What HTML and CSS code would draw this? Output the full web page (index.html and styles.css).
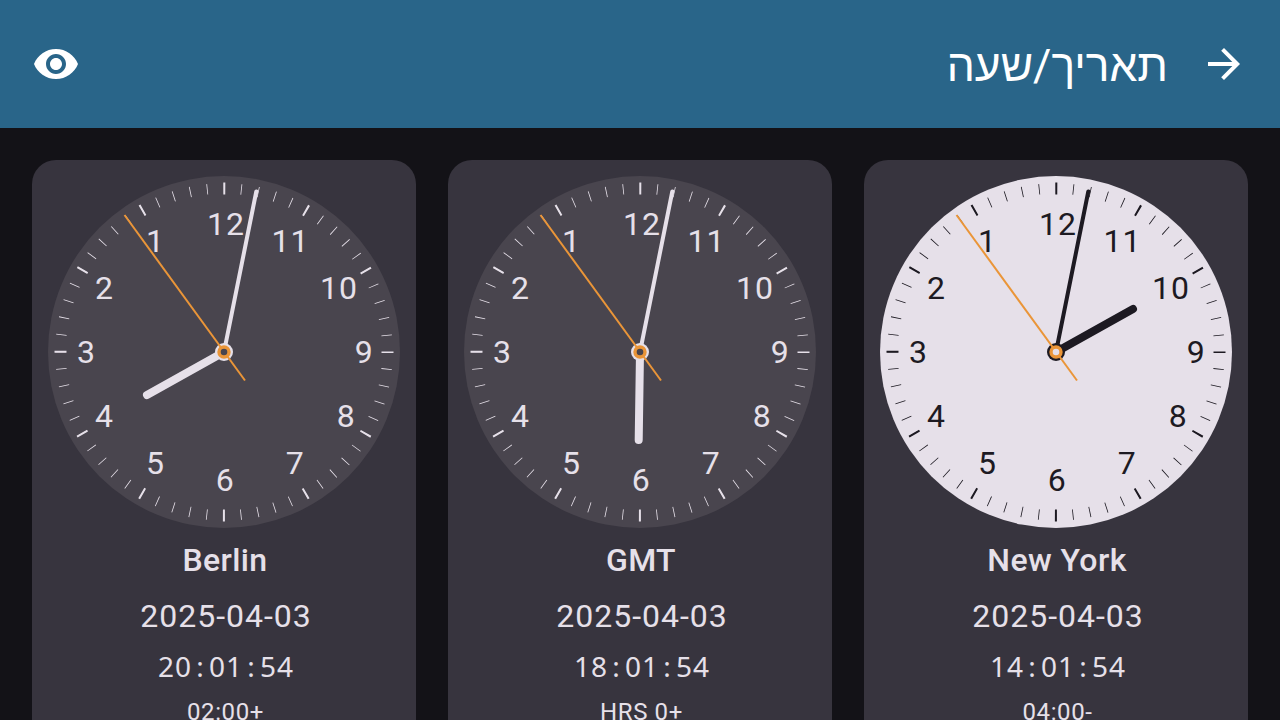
FILE: index.html
```html
<!DOCTYPE html>
<html lang="he">
<head>
<meta charset="utf-8">
<title>תאריך/שעה</title>
<link rel="stylesheet" href="styles.css">
</head>
<body>
<svg class="defs" aria-hidden="true">
  <defs>
    <g id="dial">
      <circle class="face" r="176"/>
      <circle class="tick-minor" r="163.5"/>
      <circle class="tick-hour" r="163.5"/>
      <g class="numerals">
        <text x="2" y="-117.3">12</text>
        <text x="66.5" y="-100.3">11</text>
        <text x="115" y="-53.3">10</text>
        <text x="140.3" y="10.700">9</text>
        <text x="122.300" y="74.700">8</text>
        <text x="71.300" y="121.700">7</text>
        <text x="1.300" y="138.700">6</text>
        <text x="-68.500" y="121.700">5</text>
        <text x="-119.500" y="74.700">4</text>
        <text x="-137.500" y="10.700">3</text>
        <text x="-119.500" y="-53.300">2</text>
        <text x="-68.500" y="-100.300">1</text>
      </g>
      <path class="minute" d="M0 0L32.3-160.5"/>
    </g>
    <g id="hub">
      <circle class="hub-outer" r="9"/>
      <path class="second" d="M-99.5-137L21 28.5"/>
      <circle class="hub-ring" r="5"/>
    </g>
  </defs>
</svg>

<header class="toolbar">
  <svg class="eye" viewBox="0 0 24 24"><path d="M12 4.5C7 4.5 2.73 7.61 1 12c1.73 4.39 6 7.5 11 7.5s9.27-3.110 11-7.5c-1.730-4.390-6-7.500-11-7.500zM12 17c-2.760 0-5-2.240-5-5s2.240-5 5-5 5 2.240 5 5-2.240 5-5 5zm0-8c-1.660 0-3 1.340-3 3s1.340 3 3 3 3-1.340 3-3-1.340-3-3-3z"/></svg>
  <h1 class="title" dir="rtl">תאריך/שעה</h1>
  <svg class="arrow" viewBox="0 0 24 24"><path d="M12 4l-1.410 1.410L16.170 11H4v2h12.170l-5.580 5.590L12 20l8-8z"/></svg>
</header>

<main class="clocks">
  <section class="card">
    <svg class="clock" viewBox="-176 -176 352 352">
      <use href="#dial"/><path class="hour" d="M0 0L-77 43"/><use href="#hub"/>
    </svg>
    <h2 class="city">Berlin</h2>
    <p class="date">2025-04-03</p>
    <p class="time">20<i>:</i>01<i>:</i>54</p>
    <p class="offset">02:00+</p>
  </section>
  <section class="card">
    <svg class="clock" viewBox="-176 -176 352 352">
      <use href="#dial"/><path class="hour" d="M0 0L-1.300 88"/><use href="#hub"/>
    </svg>
    <h2 class="city">GMT</h2>
    <p class="date">2025-04-03</p>
    <p class="time">18<i>:</i>01<i>:</i>54</p>
    <p class="offset">HRS 0+</p>
  </section>
  <section class="card">
    <svg class="clock day" viewBox="-176 -176 352 352">
      <use href="#dial"/><path class="hour" d="M0 0L77-43"/><use href="#hub"/>
    </svg>
    <h2 class="city">New York</h2>
    <p class="date">2025-04-03</p>
    <p class="time">14<i>:</i>01<i>:</i>54</p>
    <p class="offset">04:00-</p>
  </section>
</main>
</body>
</html>
```
FILE: styles.css
```css
* { box-sizing: border-box; }
html, body { height: 100%; overflow: hidden; }
body {
  margin: 0;
  background: #131217;
  color: #e6e0e9;
  font-family: Roboto, "Noto Sans", sans-serif;
}
.defs { display: block; width: 0; height: 0; }
.toolbar {
  display: flex;
  align-items: center;
  height: 128px;
  padding: 0 32px;
  background: #296589;
  color: #fff;
}
.toolbar svg { width: 48px; height: 48px; fill: currentColor; flex: none; }
.title {
  flex: 1;
  margin: 0 32px 0 0;
  padding-top: 4px;
  font-size: 44.4px;
  line-height: 52px;
  font-weight: 400;
  white-space: nowrap;
}
.clocks {
  display: grid;
  grid-template-columns: repeat(3, 1fr);
  gap: 32px;
  height: calc(100% - 128px);
  padding: 32px 32px 0;
}
.card {
  display: flex;
  flex-direction: column;
  align-items: center;
  min-height: 0;
  padding-top: 16px;
  border-radius: 24px 24px 0 0;
  background: #37343e;
}
.card h2, .card p { margin: 0; white-space: nowrap; }
.clock {
  --face: #49454e;
  --ink: #e6e0e9;
  width: 352px;
  height: 352px;
  flex: none;
}
.clock.day { --face: #e6e0e9; --ink: #1d1a22; }
.face { fill: var(--face); }
.tick-minor, .tick-hour { fill: none; stroke: var(--ink); stroke-width: 10.5; }
.tick-minor { stroke-dasharray: 0.8 16.3217; stroke-dashoffset: 0.4; }
.tick-hour { stroke-width: 12; stroke-dasharray: 2 83.6084; stroke-dashoffset: 1; }
.numerals {
  fill: var(--ink);
  font-size: 32px;
  letter-spacing: 1px;
  text-anchor: middle;
}
.minute, .hour { stroke: var(--ink); stroke-linecap: round; }
.minute { stroke-width: 4; }
.hour { stroke-width: 8; }
.second { stroke: #ea9538; stroke-width: 2; }
.hub-outer { fill: var(--ink); }
.hub-ring { fill: var(--face); stroke: #ea9538; stroke-width: 3.4; }
.city {
  padding: 8px 0 0 2px;
  font-size: 32px;
  line-height: 48px;
  font-weight: 500;
  letter-spacing: 0.4px;
}
.date {
  padding: 8px 0 0 4px;
  font-size: 32px;
  line-height: 48px;
  letter-spacing: 1px;
}
.time {
  padding: 6px 0 0 4px;
  font: 28px/40px "Noto Sans", sans-serif;
  letter-spacing: 1px;
}
.time i {
  display: inline-block;
  width: 17px;
  font-style: normal;
  text-align: center;
}
.offset {
  padding: 10px 0 0 3px;
  font-size: 24px;
  line-height: 32px;
  letter-spacing: 0.6px;
}
```
